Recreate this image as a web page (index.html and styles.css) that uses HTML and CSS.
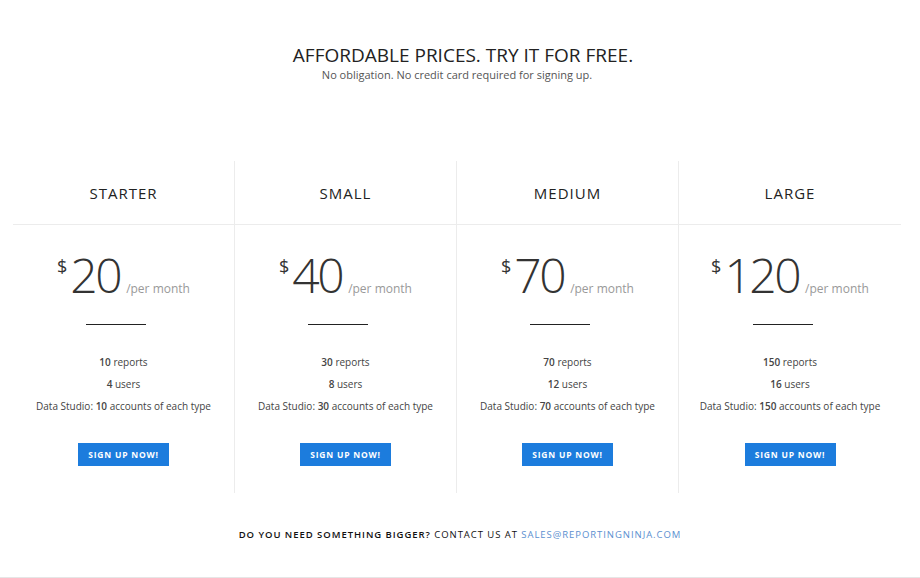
FILE: index.html
```html
<!DOCTYPE html>
<html>
<head>
<meta charset="utf-8">
<link rel="stylesheet" href="styles.css">
</head>
<body>
<div class="page">
  <header class="intro">
    <h1 class="title">AFFORDABLE PRICES. TRY IT FOR FREE.</h1>
    <p class="subtitle">No obligation. No credit card required for signing up.</p>
  </header>

  <section class="plans">
    <div class="plan">
      <div class="plan-name">STARTER</div>
      <div class="plan-body">
        <div class="price"><span class="cur">$</span><span class="amount">20</span><span class="per">/per month</span></div>
        <div class="rule"></div>
        <ul class="features">
          <li><b>10</b> reports</li>
          <li><b>4</b> users</li>
          <li>Data Studio: <b>10</b> accounts of each type</li>
        </ul>
        <a class="btn" href="#">SIGN UP NOW!</a>
      </div>
    </div>
    <div class="plan">
      <div class="plan-name">SMALL</div>
      <div class="plan-body">
        <div class="price"><span class="cur">$</span><span class="amount">40</span><span class="per">/per month</span></div>
        <div class="rule"></div>
        <ul class="features">
          <li><b>30</b> reports</li>
          <li><b>8</b> users</li>
          <li>Data Studio: <b>30</b> accounts of each type</li>
        </ul>
        <a class="btn" href="#">SIGN UP NOW!</a>
      </div>
    </div>
    <div class="plan">
      <div class="plan-name">MEDIUM</div>
      <div class="plan-body">
        <div class="price"><span class="cur">$</span><span class="amount">70</span><span class="per">/per month</span></div>
        <div class="rule"></div>
        <ul class="features">
          <li><b>70</b> reports</li>
          <li><b>12</b> users</li>
          <li>Data Studio: <b>70</b> accounts of each type</li>
        </ul>
        <a class="btn" href="#">SIGN UP NOW!</a>
      </div>
    </div>
    <div class="plan">
      <div class="plan-name">LARGE</div>
      <div class="plan-body">
        <div class="price"><span class="cur">$</span><span class="amount">120</span><span class="per">/per month</span></div>
        <div class="rule"></div>
        <ul class="features">
          <li><b>150</b> reports</li>
          <li><b>16</b> users</li>
          <li>Data Studio: <b>150</b> accounts of each type</li>
        </ul>
        <a class="btn" href="#">SIGN UP NOW!</a>
      </div>
    </div>
  </section>

  <p class="contact">DO YOU NEED SOMETHING BIGGER? <span class="contact-light">CONTACT US AT</span> <a class="mail" href="#">SALES@REPORTINGNINJA.COM</a></p>
</div>
</body>
</html>
```

FILE: styles.css
```css
* { box-sizing: border-box; }
html, body { margin: 0; padding: 0; background: #fff; }
body {
  font-family: "Open Sans", "Noto Sans", sans-serif;
  color: #333;
  width: 920px;
  height: 578px;
  overflow: hidden;
}
.page {
  height: 578px;
  border-bottom: 1px solid #e6e6e6;
  display: flex;
  flex-direction: column;
}
.intro {
  text-align: center;
  padding-top: 42px;
}
.title {
  margin: 0 0 0 6px;
  font-size: 19px;
  font-weight: 400;
  line-height: 26px;
  color: #222;
}
.subtitle {
  margin: 0 0 0 -6px;
  font-size: 11px;
  line-height: 14px;
  color: #555;
}
.plans {
  margin: 79px 0 0 13px;
  width: 888px;
  display: grid;
  grid-template-columns: repeat(4, 1fr);
}
.plan {
  border-right: 1px solid #ececec;
  text-align: center;
}
.plan:last-child { border-right: none; }
.plan-name {
  height: 64px;
  border-bottom: 1px solid #ececec;
  display: flex;
  align-items: center;
  justify-content: center;
  font-size: 15px;
  letter-spacing: 1px;
  color: #222;
}
.plan-body {
  display: flex;
  flex-direction: column;
  align-items: center;
  padding-top: 22px;
  height: 268px;
}
.price {
  display: flex;
  align-items: baseline;
  justify-content: center;
  height: 56px;
}
.cur {
  font-size: 18px;
  font-weight: 400;
  align-self: flex-start;
  margin-top: 7px;
  margin-right: 3px;
  color: #333;
}
.amount {
  font-size: 48px;
  font-weight: 300;
  line-height: 56px;
  color: #333;
  letter-spacing: -2.5px;
}
.per {
  font-size: 12px;
  color: #999;
  margin-left: 6px;
}
.rule {
  width: 60px;
  height: 1px;
  background: #222;
  margin-top: 21px;
  margin-right: 15px;
}
.features {
  list-style: none;
  margin: 26px 0 0;
  padding: 0;
  font-size: 10px;
  line-height: 22px;
  color: #444;
}
.features b { font-weight: 600; }
.btn {
  margin-top: 26px;
  display: block;
  width: 91px;
  height: 23px;
  line-height: 23px;
  background: #1c7cdd;
  color: #fff;
  font-size: 8.5px;
  font-weight: 700;
  letter-spacing: 0.8px;
  text-decoration: none;
}
.contact {
  margin: 35px 0 0;
  text-align: center;
  font-size: 9.5px;
  font-weight: 600;
  letter-spacing: 0.95px;
  color: #111;
  line-height: 14px;
}
.contact-light { font-weight: 400; }
.mail {
  color: #5b8fd0;
  font-weight: 400;
  text-decoration: none;
}
```
